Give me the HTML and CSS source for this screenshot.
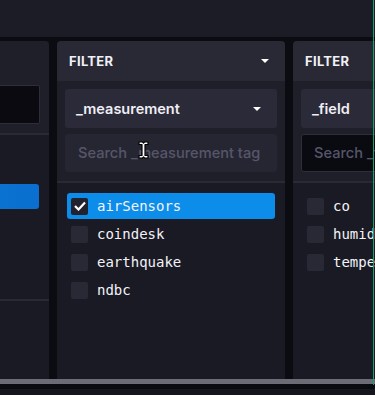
FILE: index.html
```html
<!DOCTYPE html>
<html lang="en">
<head>
    <meta charset="UTF-8">
    <meta name="viewport" content="width=device-width, initial-scale=1.0">
    <title>Query Builder</title>
    <link rel="stylesheet" href="styles.css">
</head>
<body>
    <div class="page">
        <div class="topbar"></div>

        <div class="builder">
            <!-- FROM (cut off on the left) -->
            <div class="panel panel-from">
                <div class="from-top">
                    <div class="from-search"></div>
                </div>
                <div class="from-list">
                    <div class="from-item"></div>
                </div>
                <div class="from-foot"></div>
            </div>

            <!-- _measurement filter -->
            <div class="panel">
                <div class="panel-header">
                    <span class="panel-title">FILTER</span>
                    <span class="caret"></span>
                </div>
                <div class="panel-controls">
                    <div class="dropdown">
                        <span>_measurement</span>
                        <span class="caret"></span>
                    </div>
                    <div class="search">
                        <span class="placeholder">Search _measurement tag</span>
                    </div>
                </div>
                <div class="tag-list">
                    <div class="tag-item selected">
                        <span class="checkbox">
                            <svg width="12" height="10" viewBox="0 0 12 10"><path d="M1 5 L4.5 8.5 L11 1.5" fill="none" stroke="#fff" stroke-width="2.2"/></svg>
                        </span>
                        <span class="tag-name">airSensors</span>
                    </div>
                    <div class="tag-item">
                        <span class="checkbox"></span>
                        <span class="tag-name">coindesk</span>
                    </div>
                    <div class="tag-item">
                        <span class="checkbox"></span>
                        <span class="tag-name">earthquake</span>
                    </div>
                    <div class="tag-item">
                        <span class="checkbox"></span>
                        <span class="tag-name">ndbc</span>
                    </div>
                </div>
            </div>

            <!-- _field filter (cut off on the right) -->
            <div class="panel">
                <div class="panel-header">
                    <span class="panel-title">FILTER</span>
                    <span class="caret"></span>
                </div>
                <div class="panel-controls">
                    <div class="dropdown">
                        <span>_field</span>
                        <span class="caret"></span>
                    </div>
                    <div class="search search-focus">
                        <span class="placeholder">Search _field tag values</span>
                    </div>
                </div>
                <div class="tag-list">
                    <div class="tag-item">
                        <span class="checkbox"></span>
                        <span class="tag-name">co</span>
                    </div>
                    <div class="tag-item">
                        <span class="checkbox"></span>
                        <span class="tag-name">humidity</span>
                    </div>
                    <div class="tag-item">
                        <span class="checkbox"></span>
                        <span class="tag-name">temperature</span>
                    </div>
                </div>
            </div>
        </div>

        <div class="scrollbar"></div>
        <div class="bottom"></div>

        <!-- mouse text cursor over the search box -->
        <svg class="ibeam" width="11" height="18" viewBox="0 0 11 18">
            <path d="M1 1 H4.5 L5.5 2 L6.5 1 H10 V3.5 H7 V14.5 H10 V17 H6.5 L5.5 16 L4.5 17 H1 V14.5 H4 V3.5 H1 Z" fill="#fff" stroke="#000" stroke-width="1.2" stroke-linejoin="round"/>
        </svg>
        <div class="edge-line"></div>
    </div>
</body>
</html>
```

FILE: styles.css
```css
* {
    margin: 0;
    padding: 0;
    box-sizing: border-box;
}

body {
    font-family: Inter, 'Noto Sans', 'Liberation Sans', sans-serif;
    background: #101017;
    color: #e7e8f0;
    overflow: hidden;
}

.page {
    position: relative;
    width: 375px;
    height: 395px;
    overflow: hidden;
}

.topbar {
    height: 37px;
    background: #1c1c26;
}

.builder {
    display: flex;
    gap: 8px;
    height: 342px;
    padding-top: 4px;
    margin-left: -179px;
    background: #0b0b12;
}

.panel {
    flex: 0 0 228px;
    display: flex;
    flex-direction: column;
    background: #1a1a24;
    border-radius: 4px 4px 0 0;
    overflow: hidden;
}

/* left panel */
.from-top {
    height: 92px;
    padding: 44px 9px 0 10px;
    background: #1f1f2a;
}

.from-search {
    height: 39px;
    background: #0a0a10;
    border: 1px solid #2e2e3a;
    border-radius: 2px;
}

.from-list {
    height: 168px;
    padding: 49px 10px 0 10px;
    border-top: 2px solid #2a2a35;
    border-bottom: 2px solid #2a2a35;
}

.from-item {
    height: 25px;
    background: linear-gradient(90deg, #0b7fd6 0%, #0a6fd0 100%);
    border-radius: 3px;
}

/* filter panels */
.panel-header {
    height: 40px;
    display: flex;
    align-items: center;
    justify-content: space-between;
    padding: 0 16px 0 12px;
    background: #292936;
}

.panel-title {
    font-size: 13px;
    font-weight: 700;
    letter-spacing: 0.3px;
    color: #f1f1f6;
}

.caret {
    width: 0;
    height: 0;
    border-left: 4px solid transparent;
    border-right: 4px solid transparent;
    border-top: 4px solid #ffffff;
}

.panel-controls {
    display: flex;
    flex-direction: column;
    gap: 6px;
    padding: 8px 8px 9px 8px;
    background: #1f1f2a;
    border-bottom: 2px solid #2a2a35;
}

.dropdown {
    height: 39px;
    display: flex;
    align-items: center;
    justify-content: space-between;
    padding: 0 16px 0 11px;
    background: #2a2a38;
    border-radius: 3px;
    font-size: 14.5px;
    font-weight: 600;
    color: #eeeef5;
    white-space: nowrap;
}

.search {
    height: 38px;
    display: flex;
    align-items: center;
    padding: 0 13px;
    background: #262633;
    border-radius: 3px;
    white-space: nowrap;
    overflow: hidden;
}

.search-focus {
    background: #0a0a11;
    border: 1px solid #2f2f3b;
    padding: 0 12px;
}

.placeholder {
    font-size: 14.6px;
    font-weight: 500;
    color: #56566a;
}

.tag-list {
    display: flex;
    flex-direction: column;
    gap: 2px;
    padding: 10px 10px 0 10px;
}

.tag-item {
    height: 26px;
    display: flex;
    align-items: center;
    gap: 9px;
    padding-left: 4px;
    border-radius: 3px;
    white-space: nowrap;
}

.tag-item.selected {
    background: #0b8de9;
}

.checkbox {
    flex: 0 0 17px;
    width: 17px;
    height: 17px;
    display: flex;
    align-items: center;
    justify-content: center;
    background: #292935;
    border-radius: 2px;
}

.selected .checkbox {
    background: #22222e;
}

.tag-name {
    font-family: 'DejaVu Sans Mono', 'Liberation Mono', monospace;
    font-size: 14px;
    color: #f3f3f8;
}

.scrollbar {
    height: 5px;
    background: #6c6c76;
}

.bottom {
    height: 11px;
    border-top: 5px solid #0a0a11;
    background: #15151d;
}

/* overlays */
.ibeam {
    position: absolute;
    left: 138px;
    top: 141px;
}

.edge-line {
    position: absolute;
    top: 0;
    right: 1px;
    width: 1px;
    height: 385px;
    background: #17a463;
}
```
